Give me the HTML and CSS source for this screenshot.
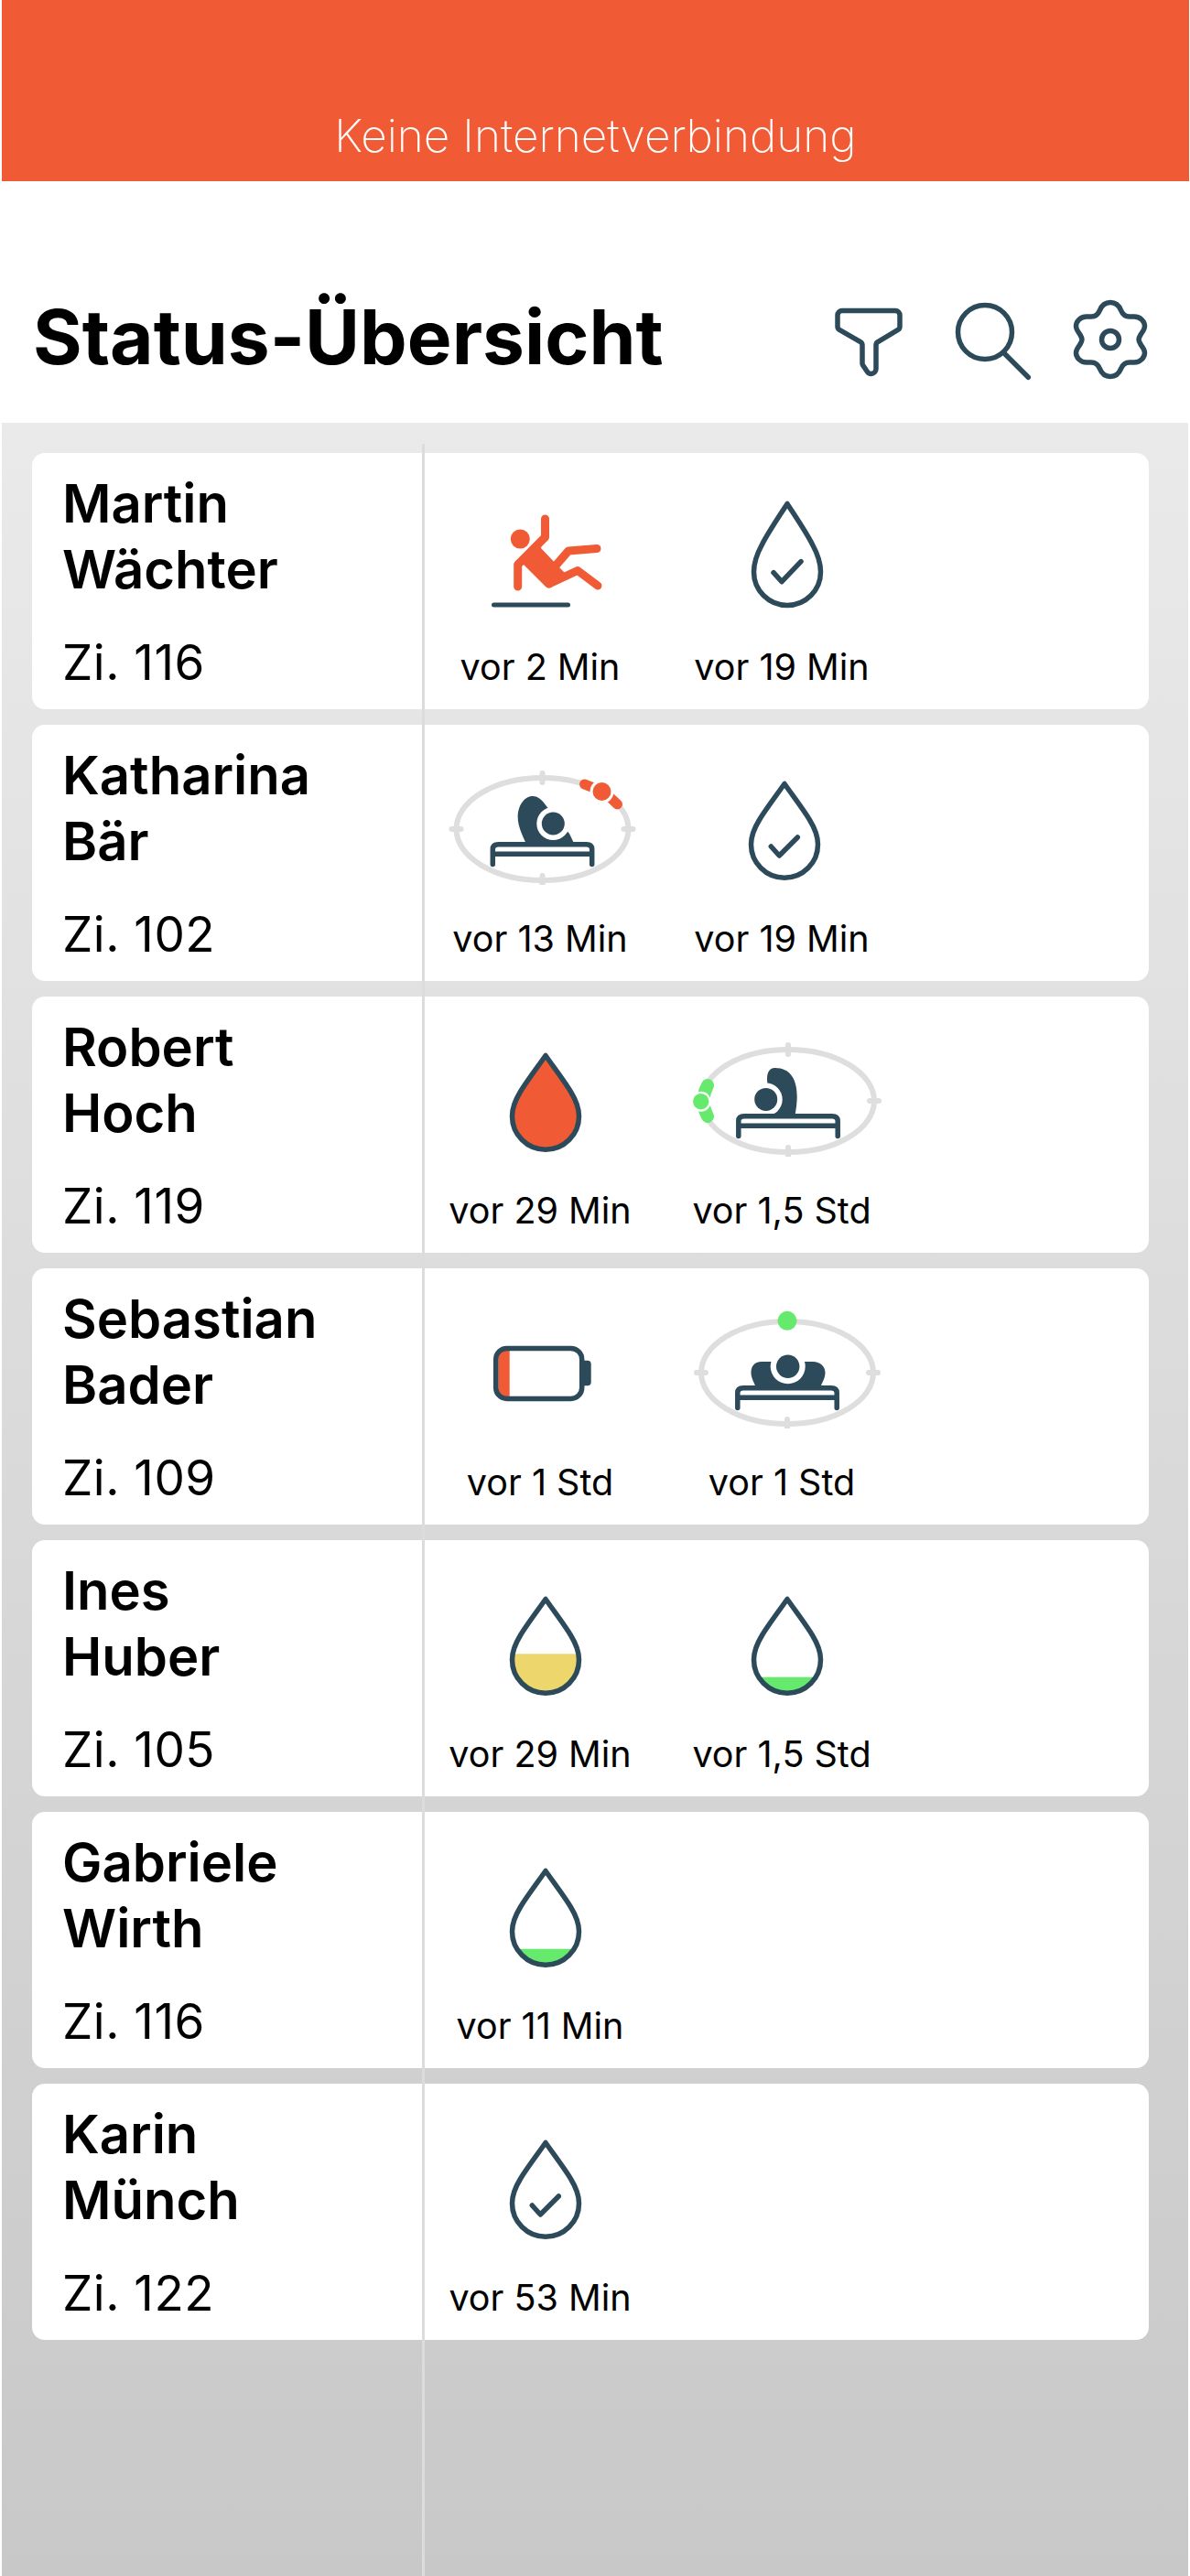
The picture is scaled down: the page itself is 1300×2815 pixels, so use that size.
FILE: index.html
```html
<!DOCTYPE html>
<html lang="de">
<head>
<meta charset="utf-8">
<title>Status-Übersicht</title>
<link rel="stylesheet" href="styles.css">
</head>
<body>
<svg class="defs" aria-hidden="true">
  <defs>
    <path id="drop-line" d="M96 29.5C88 41 75 58 68.500 69 63 78 59.500 87 59.500 95.700A36.500 36.500 0 0 0 132.500 95.700C132.500 87 129 78 123.500 69 117 58 104 41 96 29.500Z"/>
    <clipPath id="drop-clip"><use href="#drop-line"/></clipPath>
    <g id="drop"><use href="#drop-line" class="line"/></g>
    <g id="check-drop">
      <use href="#drop-line" class="line"/>
      <path class="line" d="M81.300 98 90.300 108 110.300 88"/>
    </g>
    <g id="check-drop-tall">
      <path class="line" d="M96 20.500C88 33 75 52 68.500 65 63 75 59.500 85 59.500 95A36.500 36.500 0 0 0 132.500 95C132.500 85 129 75 123.500 65 117 52 104 33 96 20.500Z"/>
      <path class="line" d="M81 95.700 90 105.700 111 83.600"/>
    </g>
    <g id="ring">
      <ellipse class="ring" cx="0" cy="0" rx="94" ry="56"/>
      <path class="tick" d="M-99 0H-89M89 0H99M0 -61V-51M0 51V61"/>
    </g>
    <g id="frame">
      <path class="line" d="M-54.200 38.500V22Q-54.200 16.700 -48 16.700H48Q54.200 16.700 54.200 22V38.500M-54.200 27.300H54.200"/>
    </g>
    <g id="bed-right">
      <use href="#ring"/>
      <path class="solid" d="M-17 17C-22.500 6-26.800-4-26.800-13-26.800-26-19.500-36-10.500-36-4.500-36-.5-32 4.500-25L29.500 5 34.200 14.700V17Z"/>
      <circle class="halo" cx="11.800" cy="-6" r="18"/>
      <circle class="solid" cx="11.800" cy="-6" r="12.500"/>
      <use href="#frame"/>
    </g>
    <g id="bed-left">
      <use href="#ring"/>
      <path class="solid" d="M-22.700-20C-24-30-21-36-14.300-36 2-36 9.700-24 9.700-5 9.700 3 8.500 10 7.300 17L-20 17Z"/>
      <circle class="halo" cx="-24.300" cy="-1.600" r="18"/>
      <circle class="solid" cx="-24.300" cy="-1.600" r="12.500"/>
      <use href="#frame"/>
    </g>
    <g id="bed-back">
      <use href="#ring"/>
      <path class="solid" d="M-33.600 17C-37 10-39.500 5-39.500 0-39.500-7-36-12-28-12H28C36-12 41.500-7 41.500 0 41.500 5 39 10 35.500 17Z"/>
      <circle class="halo" cx=".7" cy="-6.700" r="19"/>
      <circle class="solid" cx=".7" cy="-6.700" r="12.700"/>
      <use href="#frame"/>
    </g>
  </defs>
</svg>

<header class="banner">Keine Internetverbindung</header>

<div class="topbar">
  <h1 class="title">Status-Übersicht</h1>
  <svg class="tool tool-filter" viewBox="-5 -15 85 100"><path class="line" d="M10 4.500H68a5 5 0 0 1 5 5V22a4 4 0 0 1-2 3.400L49 38.600a4 4 0 0 0-2 3.400V68a5.500 5.500 0 0 1-5.500 5.500 5 5 0 0 1-4-2.200L32.600 64a4 4 0 0 1-.6-2.200V42a4 4 0 0 0-2-3.400L7 25.400A4 4 0 0 1 5 22V9.500a5 5 0 0 1 5-5z"/></svg>
  <svg class="tool tool-search" viewBox="1040 320 90 100"><circle class="line" cx="1076" cy="363" r="29.500"/><path class="line" d="M1097 386 1123.300 412.300"/></svg>
  <svg class="tool tool-gear" viewBox="1170 320 84 100"><g transform="translate(1213 371)"><path class="line" d="M0-40.500C6-40.500 9.500-37 11.500-32 13.500-27 16-25 21-25H26C33-25 37.500-19.500 37.500-14.500 37.500-11 35-8.500 33.500-6 32-3.500 31-2 31 0 31 2 32 3.500 33.500 6 35 8.500 37.500 11 37.500 14.500 37.500 19.500 33 25 26 25H21C16 25 13.500 27 11.500 32 9.500 37 6 40.500 0 40.500-6 40.500-9.500 37-11.500 32-13.500 27-16 25-21 25H-26C-33 25-37.500 19.500-37.500 14.500-37.500 11-35 8.500-33.500 6-32 3.500-31 2-31 0-31-2-32-3.500-33.500-6-35-8.500-37.500-11-37.500-14.500-37.500-19.500-33-25-26-25H-21C-16-25-13.500-27-11.500-32-9.500-37-6-40.500 0-40.500Z"/><circle class="line" r="9.500"/></g></svg>
</div>

<main class="board">
  <div class="divider"></div>

  <article class="card">
    <div class="person"><h2 class="name">Martin<br>Wächter</h2><p class="room">Zi. 116</p></div>
    <div class="cell">
      <svg class="ico" viewBox="-20 0 220 140">
        <circle class="alert" cx="68.300" cy="59" r="10.500"/>
        <path class="limb" d="M95.500 37V57L65.700 87V111"/>
        <path class="alert" d="M62 87 93 56 91 69 110 89 118 97 102 112Q99 113.500 96 111L71 86Z"/>
        <path class="limb" d="M100 108 131 93.500 153 110M108 87 121 72 152 69.500"/>
        <path class="floor" d="M39.500 131H120.500"/>
      </svg>
      <span class="when">vor 2 Min</span>
    </div>
    <div class="cell">
      <svg class="ico" viewBox="-20 0 220 140"><use href="#check-drop-tall"/></svg>
      <span class="when">vor 19 Min</span>
    </div>
  </article>

  <article class="card">
    <div class="person"><h2 class="name">Katharina<br>Bär</h2><p class="room">Zi. 102</p></div>
    <div class="cell">
      <svg class="ico" viewBox="-20 0 220 140">
        <g transform="translate(92.500 79)">
          <use href="#bed-right"/>
          <path class="arc-alert" d="M46-49A94 56 0 0 1 82-27"/>
          <circle class="halo" cx="65" cy="-41" r="13"/>
          <circle class="alert" cx="65" cy="-41" r="10"/>
        </g>
      </svg>
      <span class="when">vor 13 Min</span>
    </div>
    <div class="cell">
      <svg class="ico" viewBox="-20 0 220 140"><use href="#check-drop" x="-3"/></svg>
      <span class="when">vor 19 Min</span>
    </div>
  </article>

  <article class="card">
    <div class="person"><h2 class="name">Robert<br>Hoch</h2><p class="room">Zi. 119</p></div>
    <div class="cell">
      <svg class="ico" viewBox="-20 0 220 140"><use href="#drop-line" class="line alert-fill"/></svg>
      <span class="when">vor 29 Min</span>
    </div>
    <div class="cell">
      <svg class="ico" viewBox="-20 0 220 140">
        <g transform="translate(97 79)">
          <use href="#bed-left"/>
          <path class="arc-ok" d="M-88-17A94 56 0 0 0-88 17"/>
          <circle class="halo" cx="-95.300" cy=".7" r="11"/>
          <circle class="ok" cx="-95.300" cy=".7" r="8.700"/>
        </g>
      </svg>
      <span class="when">vor 1,5 Std</span>
    </div>
  </article>

  <article class="card">
    <div class="person"><h2 class="name">Sebastian<br>Bader</h2><p class="room">Zi. 109</p></div>
    <div class="cell">
      <svg class="ico" viewBox="-20 0 220 140">
        <path class="alert" d="M56.700 55V105H52Q44.300 105 44.300 97V63Q44.300 55 52 55Z"/>
        <rect class="line" x="41.700" y="52.400" width="94" height="55" rx="12"/>
        <path class="solid" d="M138 65.700H141.700Q145.700 65.700 145.700 69.700V89.300Q145.700 93.300 141.700 93.300H138Z"/>
      </svg>
      <span class="when">vor 1 Std</span>
    </div>
    <div class="cell">
      <svg class="ico" viewBox="-20 0 220 140">
        <g transform="translate(96 79)">
          <use href="#bed-back"/>
          <circle class="ok" cx="0" cy="-56.700" r="10.500"/>
        </g>
      </svg>
      <span class="when">vor 1 Std</span>
    </div>
  </article>

  <article class="card">
    <div class="person"><h2 class="name">Ines<br>Huber</h2><p class="room">Zi. 105</p></div>
    <div class="cell">
      <svg class="ico" viewBox="-20 0 220 140">
        <g clip-path="url(#drop-clip)"><rect class="urine" x="50" y="89.300" width="92" height="50"/></g>
        <use href="#drop"/>
      </svg>
      <span class="when">vor 29 Min</span>
    </div>
    <div class="cell">
      <svg class="ico" viewBox="-20 0 220 140">
        <g clip-path="url(#drop-clip)"><rect class="ok" x="50" y="114.700" width="92" height="25"/></g>
        <use href="#drop"/>
      </svg>
      <span class="when">vor 1,5 Std</span>
    </div>
  </article>

  <article class="card">
    <div class="person"><h2 class="name">Gabriele<br>Wirth</h2><p class="room">Zi. 116</p></div>
    <div class="cell">
      <svg class="ico" viewBox="-20 0 220 140">
        <g clip-path="url(#drop-clip)"><rect class="ok" x="50" y="114.700" width="92" height="25"/></g>
        <use href="#drop"/>
      </svg>
      <span class="when">vor 11 Min</span>
    </div>
  </article>

  <article class="card">
    <div class="person"><h2 class="name">Karin<br>Münch</h2><p class="room">Zi. 122</p></div>
    <div class="cell">
      <svg class="ico" viewBox="-20 0 220 140"><use href="#check-drop"/></svg>
      <span class="when">vor 53 Min</span>
    </div>
  </article>
</main>
</body>
</html>
```

FILE: styles.css
```css
* { box-sizing: border-box; }

html, body { margin: 0; padding: 0; }

body {
  min-height: 2815px;
  display: flex;
  flex-direction: column;
  background: #fff;
  color: #000;
  font-family: Inter, "Liberation Sans", sans-serif;
  overflow: hidden;
}

.defs { position: absolute; width: 0; height: 0; }

.banner {
  height: 198px;
  margin: 0 1px 0 2px;
  padding-bottom: 22px;
  display: flex;
  align-items: flex-end;
  justify-content: center;
  background: #f05b36;
  color: #fff;
  font-size: 49.500px;
  font-weight: 200;
  line-height: 56px;
}

.topbar {
  height: 264px;
  padding: 122px 46px 42px 36px;
  display: flex;
  align-items: center;
}

.title {
  margin: -2px auto 0 0;
  font-size: 82px;
  font-weight: 700;
  line-height: 100px;
  letter-spacing: 0;
}

.tool { height: 100px; flex: none; }
.tool-filter { width: 85px; }
.tool-search { width: 90px; margin-left: 50px; }
.tool-gear { width: 84px; margin-left: 40px; }

.board {
  position: relative;
  flex: 1;
  margin: 0 2px;
  padding: 33px 43px 0 33px;
  display: flex;
  flex-direction: column;
  gap: 17px;
  background: linear-gradient(#eaeaea, #c8c8c8);
}

.divider {
  position: absolute;
  left: 459px;
  top: 23px;
  bottom: 0;
  width: 3px;
  background: #dcdcdc;
}

.card {
  height: 280px;
  display: flex;
  background: #fff;
  border-radius: 14px;
}

.person {
  width: 423px;
  flex: none;
  padding: 19px 0 0 33px;
}

.name {
  margin: 0;
  font-size: 58px;
  font-weight: 600;
  line-height: 72px;
}

.room {
  margin: 35px 0 0;
  font-size: 53px;
  font-weight: 400;
  line-height: 62px;
  letter-spacing: .5px;
}

.cell {
  width: 264px;
  flex: none;
  padding-top: 35px;
  display: flex;
  flex-direction: column;
  align-items: center;
}

.ico { width: 220px; height: 140px; flex: none; }

.when {
  margin-top: 34px;
  font-size: 39.500px;
  line-height: 50px;
  white-space: nowrap;
}

.line {
  fill: none;
  stroke: #2d4a5a;
  stroke-width: 5.500px;
  stroke-linecap: round;
  stroke-linejoin: round;
}

.alert-fill { fill: #f05b36; }
.solid { fill: #2d4a5a; }
.alert { fill: #f05b36; }
.ok { fill: #66ea6d; }
.urine { fill: #edd66b; }
.halo { fill: #fff; }
.ring { fill: none; stroke: #dedede; stroke-width: 6px; }
.tick { fill: none; stroke: #dedede; stroke-width: 6px; stroke-linecap: round; }
.limb { fill: none; stroke: #f05b36; stroke-width: 9px; stroke-linecap: round; stroke-linejoin: round; }
.floor { fill: none; stroke: #2d4a5a; stroke-width: 5px; stroke-linecap: round; }
.arc-alert { fill: none; stroke: #f05b36; stroke-width: 11px; stroke-linecap: round; }
.arc-ok { fill: none; stroke: #66ea6d; stroke-width: 14px; stroke-linecap: round; }
```
